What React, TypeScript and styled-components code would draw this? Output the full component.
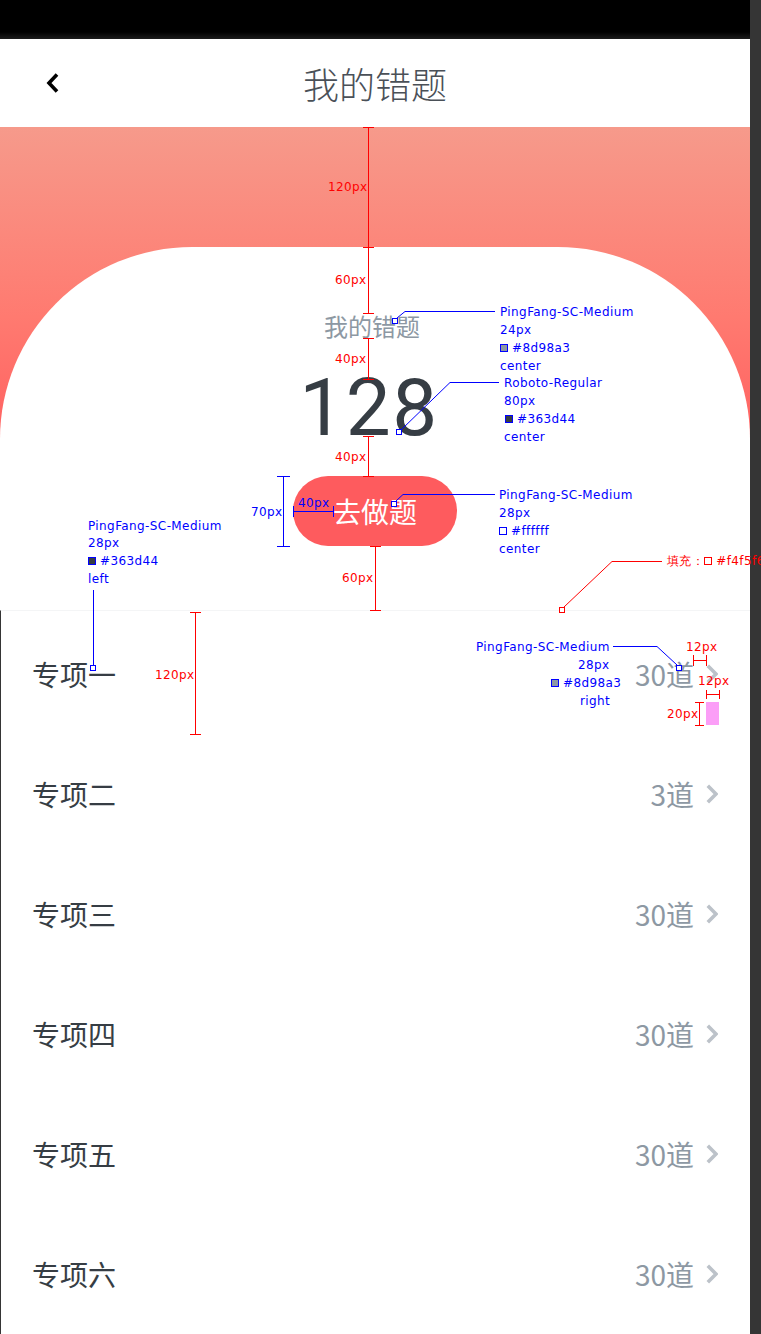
import React from "react";
import styled, { createGlobalStyle } from "styled-components";

const GlobalStyle = createGlobalStyle`
  html, body { margin: 0; padding: 0; background: #353535; }
  body { font-family: "Noto Sans CJK SC", "Noto Sans", sans-serif; }
  #root { width: 761px; height: 1334px; }
`;

const Frame = styled.div`
  position: relative;
  width: 761px;
  height: 1334px;
  overflow: hidden;
  background: #353535;
  display: flex;
`;

const Screen = styled.div`
  width: 750px;
  display: flex;
  flex-direction: column;
  background: #fff;
`;

const StatusBar = styled.div`
  height: 39px;
  flex-shrink: 0;
  background: linear-gradient(180deg, #000 0, #000 32px, #1c1c1c 39px);
`;

const NavBar = styled.header`
  height: 88px;
  flex-shrink: 0;
  display: grid;
  grid-template-columns: 120px 1fr 120px;
  align-items: center;
  background: #fff;
`;

const BackButton = styled.button`
  width: 40px;
  height: 40px;
  margin-left: 33px;
  padding: 0;
  border: 0;
  background: transparent;
  display: flex;
  align-items: center;
  justify-content: center;
`;

const NavTitle = styled.h1`
  margin: 0;
  text-align: center;
  font-size: 36px;
  font-weight: 300;
  line-height: 40px;
  color: #4a5057;
`;

const Hero = styled.section`
  flex-shrink: 0;
  padding-top: 120px;
  background: linear-gradient(180deg, #f69a8b 0px, #ff7a70 190px, #ff6060 320px, #ff6060 100%);
`;

const Card = styled.div`
  background: #fff;
  border-radius: 192px 192px 0 0;
  padding: 66px 0 64px;
  display: flex;
  flex-direction: column;
  align-items: center;
`;

const CardLabel = styled.div`
  margin-right: 6px;
  font-size: 24px;
  line-height: 26px;
  color: #8d98a3;
`;

const BigNumber = styled.div`
  margin-top: 41px;
  margin-right: 12px;
  font-family: Roboto, "Liberation Sans", sans-serif;
  font-size: 80px;
  line-height: 57px;
  letter-spacing: 1.5px;
  color: #363d44;
`;

const PrimaryButton = styled.button`
  margin-top: 39px;
  height: 70px;
  padding: 0 40px;
  border: 0;
  border-radius: 35px;
  background: #fe5b5e;
  color: #fff;
  font-family: "Noto Sans CJK SC", sans-serif;
  font-size: 28px;
  line-height: 70px;
`;

const List = styled.ul`
  margin: 0;
  padding: 3px 0 0;
  list-style: none;
  border-top: 1px solid #f4f5f6;
  border-left: 1px solid #353535;
  flex: 1;
`;

const Row = styled.li`
  height: 120px;
  display: flex;
  align-items: center;
  padding: 0 32px 0 31px;
`;

const RowTitle = styled.span`
  flex: 1;
  font-size: 28px;
  line-height: 28px;
  color: #363d44;
`;

const RowCount = styled.span`
  font-size: 28px;
  line-height: 28px;
  color: #8d98a3;
  margin-right: 12px;
`;

const Chevron = () => (
  <svg width="12" height="20" viewBox="0 0 12 20">
    <polyline points="1.8,1.8 10,10 1.8,18.2" fill="none" stroke="#bcc2c9" strokeWidth="3.6" />
  </svg>
);

/* ---------- annotation overlay ---------- */

const Overlay = styled.div`
  position: absolute;
  inset: 0;
  pointer-events: none;
`;

const OverlaySvg = styled.svg`
  position: absolute;
  left: 0;
  top: 0;
`;

const AnnoText = styled.span<{ $x: number; $y: number; $c: string }>`
  position: absolute;
  left: ${(p) => p.$x}px;
  top: ${(p) => p.$y}px;
  transform: translateY(-50%);
  font-family: "DejaVu Sans", Verdana, sans-serif;
  font-size: 12px;
  line-height: 14px;
  letter-spacing: 0.4px;
  white-space: nowrap;
  color: ${(p) => p.$c};
  display: flex;
  align-items: center;
`;

const Swatch = styled.i<{ $fill: string; $border: string }>`
  display: inline-block;
  width: 6px;
  height: 6px;
  margin-right: 4px;
  background: ${(p) => p.$fill};
  border: 1px solid ${(p) => p.$border};
`;

const RED = "#ff0000";
const BLUE = "#0000ff";

type Label = { x: number; y: number; c: string; t: string; sw?: string };

const labels: Label[] = [
  { x: 328, y: 187, c: RED, t: "120px" },
  { x: 335, y: 280, c: RED, t: "60px" },
  { x: 335, y: 359, c: RED, t: "40px" },
  { x: 335, y: 457, c: RED, t: "40px" },
  { x: 342, y: 578, c: RED, t: "60px" },
  { x: 155, y: 675, c: RED, t: "120px" },
  { x: 686, y: 647, c: RED, t: "12px" },
  { x: 698, y: 681, c: RED, t: "12px" },
  { x: 667, y: 714, c: RED, t: "20px" },

  { x: 500, y: 312, c: BLUE, t: "PingFang-SC-Medium" },
  { x: 500, y: 330, c: BLUE, t: "24px" },
  { x: 500, y: 348, c: BLUE, t: "#8d98a3", sw: "#8d98a3" },
  { x: 500, y: 366, c: BLUE, t: "center" },

  { x: 504, y: 383, c: BLUE, t: "Roboto-Regular" },
  { x: 504, y: 401, c: BLUE, t: "80px" },
  { x: 505, y: 419, c: BLUE, t: "#363d44", sw: "#363d44" },
  { x: 504, y: 437, c: BLUE, t: "center" },

  { x: 499, y: 495, c: BLUE, t: "PingFang-SC-Medium" },
  { x: 499, y: 513, c: BLUE, t: "28px" },
  { x: 499, y: 531, c: BLUE, t: "#ffffff", sw: "#ffffff" },
  { x: 499, y: 549, c: BLUE, t: "center" },

  { x: 88, y: 526, c: BLUE, t: "PingFang-SC-Medium" },
  { x: 88, y: 543, c: BLUE, t: "28px" },
  { x: 88, y: 561, c: BLUE, t: "#363d44", sw: "#363d44" },
  { x: 88, y: 579, c: BLUE, t: "left" },

  { x: 476, y: 647, c: BLUE, t: "PingFang-SC-Medium" },
  { x: 578, y: 665, c: BLUE, t: "28px" },
  { x: 551, y: 683, c: BLUE, t: "#8d98a3", sw: "#8d98a3" },
  { x: 580, y: 701, c: BLUE, t: "right" },

  { x: 251, y: 512, c: BLUE, t: "70px" },
  { x: 298, y: 503, c: BLUE, t: "40px" },
];

const VDim = ({ x, y1, y2, c, w = 11 }: { x: number; y1: number; y2: number; c: string; w?: number }) => (
  <g stroke={c} strokeWidth="1" shapeRendering="crispEdges">
    <line x1={x + 0.5} y1={y1} x2={x + 0.5} y2={y2} />
    <line x1={x - (w - 1) / 2} y1={y1 + 0.5} x2={x + (w + 1) / 2} y2={y1 + 0.5} />
    <line x1={x - (w - 1) / 2} y1={y2 - 0.5} x2={x + (w + 1) / 2} y2={y2 - 0.5} />
  </g>
);

const HDim = ({ y, x1, x2, c, h = 11 }: { y: number; x1: number; x2: number; c: string; h?: number }) => (
  <g stroke={c} strokeWidth="1" shapeRendering="crispEdges">
    <line x1={x1} y1={y + 0.5} x2={x2} y2={y + 0.5} />
    <line x1={x1 + 0.5} y1={y - (h - 1) / 2} x2={x1 + 0.5} y2={y + (h + 1) / 2} />
    <line x1={x2 - 0.5} y1={y - (h - 1) / 2} x2={x2 - 0.5} y2={y + (h + 1) / 2} />
  </g>
);

const Marker = ({ x, y, c }: { x: number; y: number; c: string }) => (
  <rect x={x - 2.5} y={y - 2.5} width="5" height="5" fill="#fff" stroke={c} strokeWidth="1" shapeRendering="crispEdges" />
);

const Annotations = () => (
  <Overlay>
    <OverlaySvg width="761" height="1334" viewBox="0 0 761 1334">
      <VDim x={368} y1={127} y2={248} c={RED} />
      <VDim x={368} y1={247} y2={314} c={RED} />
      <VDim x={368} y1={338} y2={380} c={RED} />
      <VDim x={368} y1={436} y2={477} c={RED} />
      <VDim x={375} y1={546} y2={611} c={RED} />
      <VDim x={195} y1={612} y2={735} c={RED} />
      <HDim y={660} x1={693} x2={707} c={RED} />
      <HDim y={694} x1={706} x2={720} c={RED} h={9} />
      <VDim x={699} y1={702} y2={726} c={RED} w={9} />
      <rect x="706" y="702" width="13" height="23" fill="#fb9ef7" />
      <polyline points="564,607 612,561.5 662,561.5" fill="none" stroke={RED} strokeWidth="1" />
      <Marker x={562} y={610} c={RED} />

      <polyline points="397,318 405,311.5 495,311.5" fill="none" stroke={BLUE} strokeWidth="1" />
      <Marker x={395} y={321} c={BLUE} />
      <polyline points="401,430 450,382.5 499,382.5" fill="none" stroke={BLUE} strokeWidth="1" />
      <Marker x={399} y={432} c={BLUE} />
      <polyline points="396,501 403,494.5 495,494.5" fill="none" stroke={BLUE} strokeWidth="1" />
      <Marker x={394} y={504} c={BLUE} />
      <VDim x={283} y1={476} y2={547} c={BLUE} w={13} />
      <HDim y={511} x1={293} x2={334} c={BLUE} />
      <line x1="93.5" y1="590" x2="93.5" y2="665" stroke={BLUE} strokeWidth="1" shapeRendering="crispEdges" />
      <Marker x={93} y={668} c={BLUE} />
      <polyline points="613,646.5 657,646.5 677,665" fill="none" stroke={BLUE} strokeWidth="1" />
      <Marker x={679} y={668} c={BLUE} />
    </OverlaySvg>

    {labels.map((l, i) => (
      <AnnoText key={i} $x={l.x} $y={l.y} $c={l.c}>
        {l.sw && <Swatch $fill={l.sw} $border={BLUE} />}
        {l.t}
      </AnnoText>
    ))}
    <AnnoText $x={667} $y={561} $c={RED}>
      填充：
      <Swatch $fill="#ffffff" $border={RED} />
      #f4f5f6
    </AnnoText>
  </Overlay>
);

const rows = [
  { title: "专项一", count: "30道" },
  { title: "专项二", count: "3道" },
  { title: "专项三", count: "30道" },
  { title: "专项四", count: "30道" },
  { title: "专项五", count: "30道" },
  { title: "专项六", count: "30道" },
];

export default function App() {
  return (
    <>
      <GlobalStyle />
      <Frame>
        <Screen>
          <StatusBar />
          <NavBar>
            <BackButton aria-label="返回">
              <svg width="16" height="22" viewBox="0 0 16 22">
                <polyline points="12,2.5 4,11 12,19.5" fill="none" stroke="#000" strokeWidth="3.6" strokeLinejoin="miter" />
              </svg>
            </BackButton>
            <NavTitle>我的错题</NavTitle>
            <span />
          </NavBar>
          <Hero>
            <Card>
              <CardLabel>我的错题</CardLabel>
              <BigNumber>128</BigNumber>
              <PrimaryButton>去做题</PrimaryButton>
            </Card>
          </Hero>
          <List>
            {rows.map((r) => (
              <Row key={r.title}>
                <RowTitle>{r.title}</RowTitle>
                <RowCount>{r.count}</RowCount>
                <Chevron />
              </Row>
            ))}
          </List>
        </Screen>
        <Annotations />
      </Frame>
    </>
  );
}
